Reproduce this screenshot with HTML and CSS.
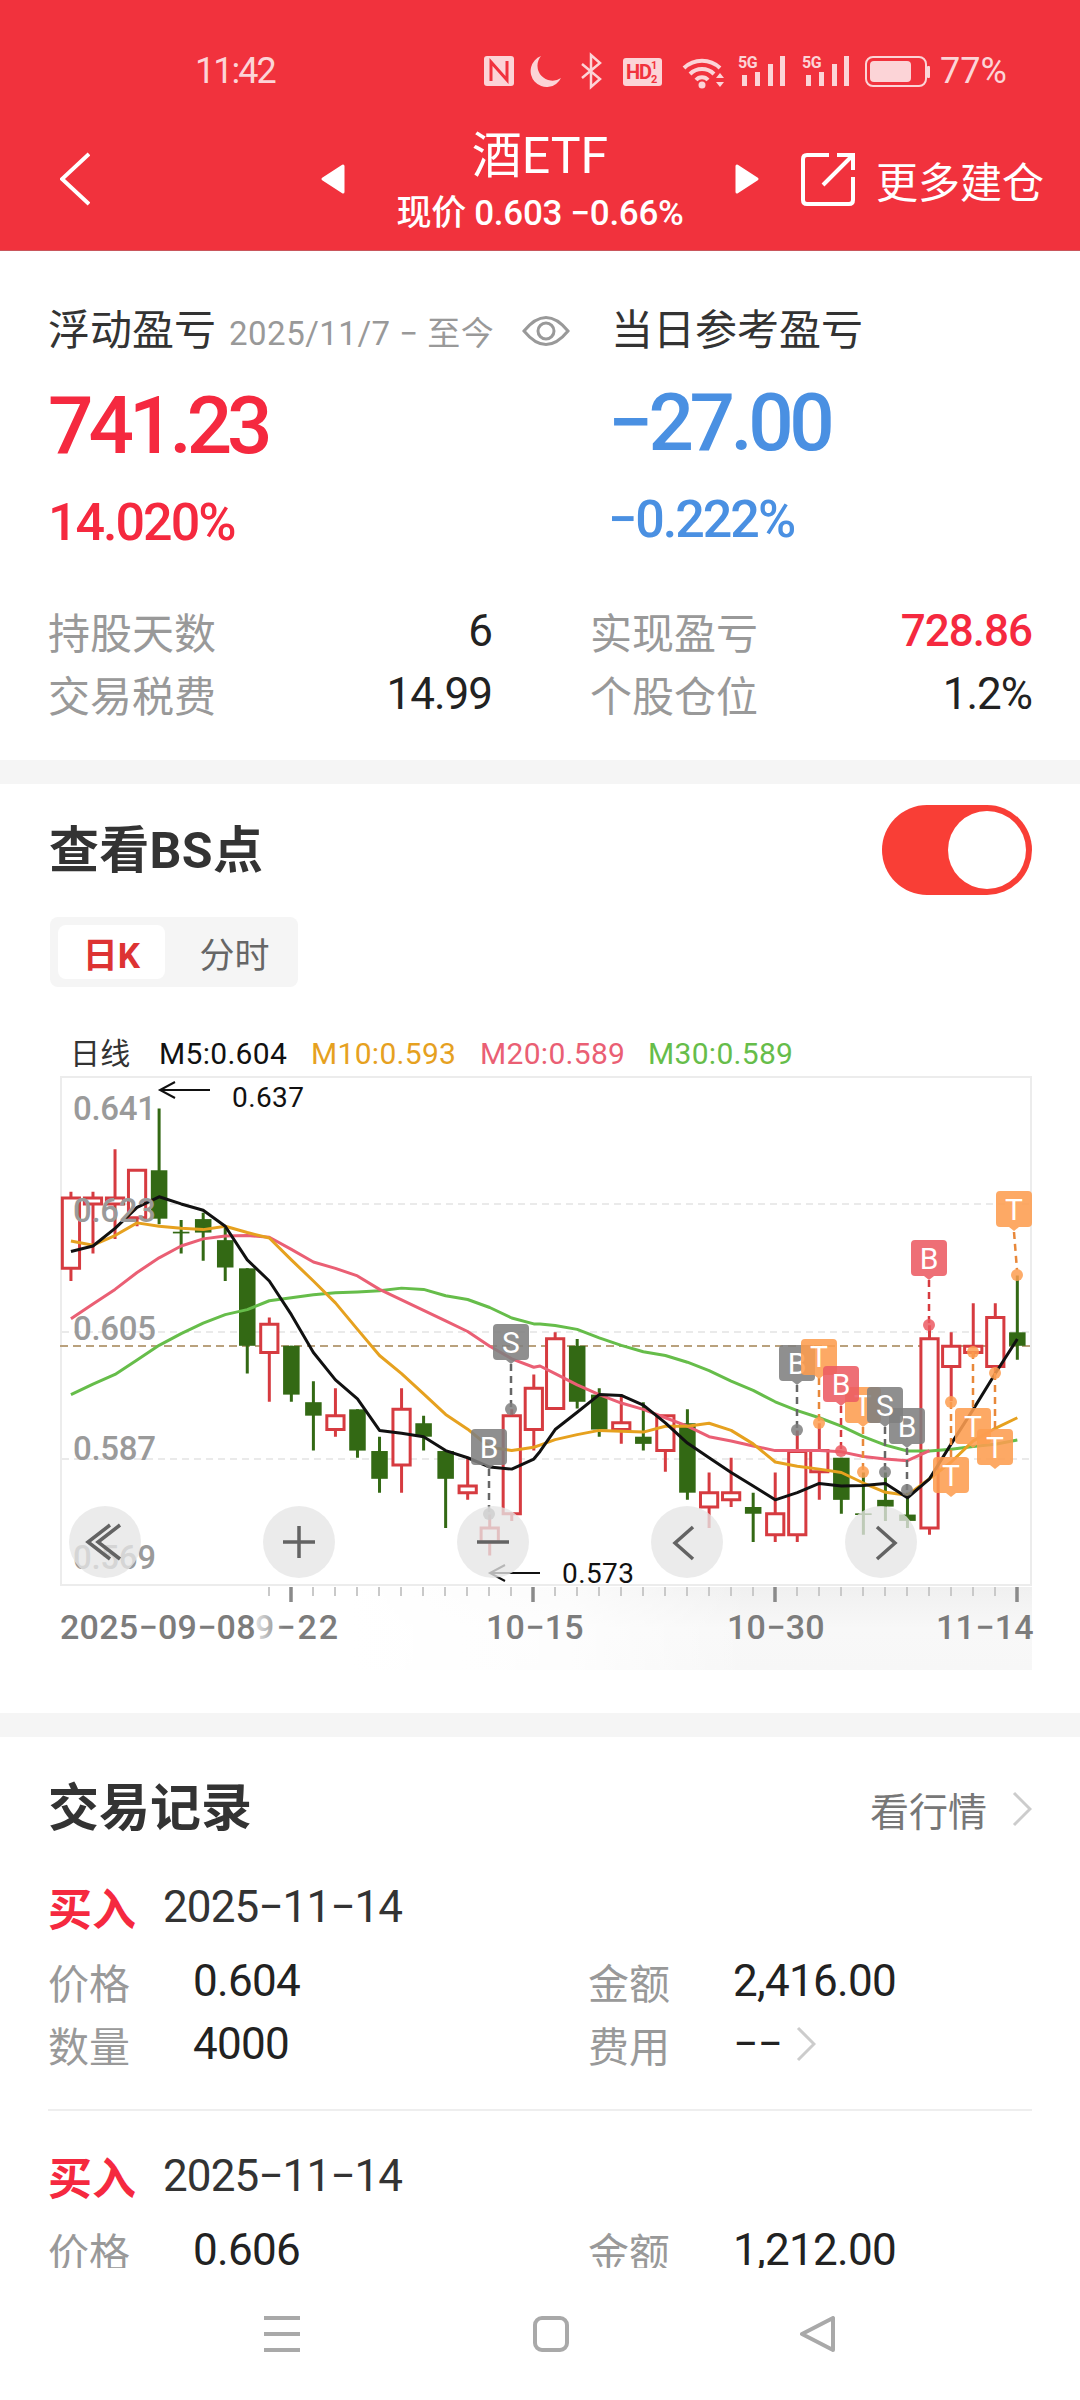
FILE: index.html
```html
<!DOCTYPE html>
<html lang="zh">
<head>
<meta charset="utf-8">
<title>酒ETF</title>
<link rel="stylesheet" href="styles.css">
</head>
<body>
<div class="page">
<div class="content">
  <header class="header">
    <div class="status">
      <span class="clock">11:42</span>
      <svg class="status-icons" viewBox="484 50 446 42" width="446" height="42">
        <rect x="484" y="56" width="30" height="30" rx="3" class="si"/>
        <path d="M491 81V62L507 80V61" class="si-cut"/>
        <path d="M541 56A16 16 0 1 0 561 78A15 15 0 0 1 541 56Z" class="si"/>
        <path d="M582 64L600 79L591 87V55L600 63L582 78" class="si-line"/>
        <rect x="623" y="58" width="39" height="28" rx="3" class="si"/>
        <text x="626" y="79" class="si-hd">HD</text>
        <text x="651" y="69" class="si-sub">1</text>
        <text x="651" y="83" class="si-sub">2</text>
        <path d="M684 68A26 26 0 0 1 720 68M690 74A17 17 0 0 1 714 74M696 80A8 8 0 0 1 708 80" class="si-wifi"/>
        <circle cx="702" cy="85" r="3.5" class="si"/>
        <path d="M716 78L720 73L724 78ZM716 82L720 87L724 82Z" class="si"/>
        <text x="738" y="68" class="si-5g">5G</text>
        <path d="M742 75h5v11h-5ZM755 72h5v14h-5ZM768 64h5v22h-5ZM780 56h5v30h-5Z" class="si"/>
        <text x="802" y="68" class="si-5g">5G</text>
        <path d="M806 75h5v11h-5ZM819 72h5v14h-5ZM832 64h5v22h-5ZM844 56h5v30h-5Z" class="si"/>
        <rect x="866" y="57" width="60" height="29" rx="7" class="si-batt"/>
        <rect x="870" y="61" width="41" height="21" rx="4" class="si"/>
        <rect x="927" y="66" width="3" height="12" rx="1" class="si"/>
      </svg>
      <span class="batt-pct">77%</span>
    </div>
    <nav class="nav">
      <svg class="nav-back" viewBox="0 0 30 54" width="30" height="54"><path d="M29 2L2 27L29 52"/></svg>
      <svg class="nav-tri" viewBox="0 0 24 30" width="24" height="30"><path d="M22 2V28L2 15Z"/></svg>
      <div class="nav-title">
        <div class="title">酒ETF</div>
        <div class="subtitle">现价 0.603 −0.66%</div>
      </div>
      <svg class="nav-tri" viewBox="0 0 24 30" width="24" height="30"><path d="M2 2V28L22 15Z"/></svg>
      <svg class="nav-share" viewBox="0 0 54 54" width="54" height="54"><path d="M28 3H6Q2 3 2 7V48Q2 52 6 52H48Q52 52 52 48V25M22 33L52 3M36 3H52V18"/></svg>
      <span class="nav-more">更多建仓</span>
    </nav>
  </header>

  <section class="pnl">
    <div class="pnl-cols">
      <div class="pnl-col">
        <div class="pnl-head">
          <span class="pnl-label">浮动盈亏</span>
          <span class="pnl-date">2025/11/7 − 至今</span>
          <svg class="eye" viewBox="0 0 48 36" width="48" height="36"><path d="M2 18Q24 -9 46 18Q24 45 2 18Z"/><circle cx="24" cy="18" r="8"/></svg>
        </div>
        <div class="pnl-value up">741.23</div>
        <div class="pnl-pct up">14.020%</div>
      </div>
      <div class="pnl-col">
        <div class="pnl-head"><span class="pnl-label">当日参考盈亏</span></div>
        <div class="pnl-value down shift">−27.00</div>
        <div class="pnl-pct down shift-x">−0.222%</div>
      </div>
    </div>
    <div class="stats">
      <div class="stat"><span class="stat-label">持股天数</span><span class="stat-val">6</span></div>
      <div class="stat"><span class="stat-label">实现盈亏</span><span class="stat-val red">728.86</span></div>
      <div class="stat"><span class="stat-label">交易税费</span><span class="stat-val">14.99</span></div>
      <div class="stat"><span class="stat-label">个股仓位</span><span class="stat-val">1.2%</span></div>
    </div>
  </section>
  <div class="gap"></div>

  <section class="bs">
    <div class="bs-head">
      <h2 class="bs-title">查看BS点</h2>
      <div class="toggle"><span class="knob"></span></div>
    </div>
    <div class="tabs"><span class="tab active">日K</span><span class="tab">分时</span></div>
    <div class="legend">
      <span class="lg-name">日线</span>
      <span class="lg-m5">M5:0.604</span>
      <span class="lg-m10">M10:0.593</span>
      <span class="lg-m20">M20:0.589</span>
      <span class="lg-m30">M30:0.589</span>
    </div>
    <svg class="chart" viewBox="0 1075 1080 605" width="1080" height="605">
      <defs>
        <path id="flag" d="M-14 0H14a4 4 0 0 1 4 4V32a4 4 0 0 1-4 4H5L0 40L-5 36H-14a4 4 0 0 1-4-4V4a4 4 0 0 1 4-4Z"/>
        <linearGradient id="fadeV" x1="0" y1="0" x2="0" y2="1"><stop offset="0" stop-color="#f0f0f0"/><stop offset=".5" stop-color="#f8f8f8"/><stop offset="1" stop-color="#f7f7f7"/></linearGradient>
        <linearGradient id="fadeH" x1="0" y1="0" x2="1" y2="0"><stop offset="0" stop-color="#fff"/><stop offset=".55" stop-color="#fff" stop-opacity=".75"/><stop offset="1" stop-color="#fff" stop-opacity="0"/></linearGradient>
        <linearGradient id="fadeT" x1="0" y1="0" x2="1" y2="0"><stop offset="0" stop-color="#fff" stop-opacity=".9"/><stop offset="1" stop-color="#fff" stop-opacity="0"/></linearGradient>
      </defs>
      <rect x="350" y="1587" width="682" height="83" fill="url(#fadeV)"/>
      <rect x="350" y="1587" width="400" height="83" fill="url(#fadeH)"/>
      <rect x="61" y="1077" width="970" height="508" class="frame"/>
      <path d="M62 1204H1030M62 1332H1030M62 1459H1030" class="grid"/>
      <path d="M60 1346H1032" class="price"/>

      <g transform="translate(0 1020) scale(.34439 .42092)">
        <g class="greens">
          <path d="M462 210V485M526 475V555M590 458V572M654 490V620M718 590V840M846 774V907M910 858V1023M1038 925V1040M1102 990V1123M1230 940V1023M1294 1024V1207"/>
          <rect x="438" y="357" width="48" height="115"/><rect x="502" y="503" width="48" height="4"/><rect x="566" y="473" width="48" height="32"/><rect x="630" y="523" width="48" height="65"/><rect x="694" y="590" width="48" height="184"/><rect x="822" y="774" width="48" height="116"/><rect x="886" y="908" width="48" height="32"/><rect x="1014" y="925" width="48" height="98"/><rect x="1078" y="1024" width="48" height="66"/><rect x="1206" y="958" width="48" height="32"/><rect x="1270" y="1024" width="48" height="66"/>
        </g>
        <g class="reds">
          <path d="M206 408V620M270 408V555M334 307V520M398 357V490M782 707V907M974 875V990M1166 875V1123M1358 1040V1140M1422 1175V1272M1486 925V1190M1550 842V1023"/>
          <rect x="181" y="423" width="50" height="167"/><rect x="245" y="423" width="50" height="14"/><rect x="309" y="423" width="50" height="14"/><rect x="373" y="357" width="50" height="113"/><rect x="757" y="723" width="50" height="67"/><rect x="949" y="940" width="50" height="33"/><rect x="1141" y="925" width="50" height="132"/><rect x="1333" y="1107" width="50" height="16"/><rect x="1397" y="1207" width="50" height="33"/><rect x="1461" y="940" width="50" height="233"/><rect x="1525" y="875" width="50" height="98"/>
        </g>
        <g transform="translate(1568 0)">
          <g class="greens">
            <path d="M108 758V923M172 875V990M300 908V1023M428 925V1140M619 1123V1240M875 1040V1173M939 1075V1223M1003 1075V1190M1067 1123V1207M1386 607V807"/>
            <rect x="84" y="774" width="48" height="133"/><rect x="148" y="890" width="48" height="83"/><rect x="276" y="990" width="48" height="17"/><rect x="404" y="958" width="48" height="165"/><rect x="595" y="1157" width="48" height="16"/><rect x="851" y="1040" width="48" height="100"/><rect x="915" y="1172" width="48" height="4"/><rect x="979" y="1140" width="48" height="16"/><rect x="1043" y="1175" width="48" height="15"/><rect x="1362" y="742" width="48" height="32"/>
          </g>
          <g class="reds">
            <path d="M44 742V923M236 890V1007M364 940V1073M491 1075V1207M555 1040V1157M683 1075V1240M747 975V1240M811 958V1140M1131 725V1223M1194 742V905M1258 673V800M1322 673V840"/>
            <rect x="19" y="757" width="50" height="166"/><rect x="211" y="957" width="50" height="16"/><rect x="339" y="940" width="50" height="83"/><rect x="466" y="1123" width="50" height="34"/><rect x="530" y="1123" width="50" height="17"/><rect x="658" y="1173" width="50" height="50"/><rect x="722" y="1025" width="50" height="198"/><rect x="786" y="1023" width="50" height="50"/><rect x="1106" y="757" width="50" height="450"/><rect x="1169" y="775" width="50" height="48"/><rect x="1233" y="775" width="50" height="15"/><rect x="1297" y="707" width="50" height="116"/>
          </g>
        </g>
        <polyline class="ma ma30" points="206,890 270,865 334,842 398,808 462,773 526,745 590,720 654,700 718,688 782,667 846,660 910,653 974,648 1038,646 1102,643 1166,637 1230,640 1294,655 1358,664 1422,683 1486,708 1550,722 1568,722 1612,726 1676,735 1740,755 1804,773 1868,788 1932,797 1996,813 2059,833 2123,858 2187,880 2251,907 2315,928 2379,945 2443,965 2507,990 2571,1010 2635,1024 2699,1024 2762,1020 2826,1013 2890,1008 2954,998"/>
        <polyline class="ma ma20" points="206,710 270,675 334,640 398,600 462,565 526,537 590,520 654,513 718,512 782,516 846,545 910,575 974,590 1038,608 1102,640 1166,665 1230,690 1294,715 1358,740 1422,775 1486,805 1550,825 1568,822 1612,840 1676,867 1740,890 1804,910 1868,925 1932,945 1996,965 2059,990 2123,1000 2187,1012 2251,1023 2315,1023 2379,1023 2443,1026 2507,1037 2571,1043 2635,1047 2699,1023"/>
        <polyline class="ma ma10" points="206,525 270,535 334,512 398,482 462,490 526,495 590,498 654,490 718,505 782,518 846,570 910,620 974,672 1038,735 1102,797 1166,840 1230,888 1294,937 1358,972 1422,1015 1486,1023 1550,1015 1568,1010 1612,997 1676,985 1740,975 1804,977 1868,979 1932,965 1996,965 2059,958 2123,975 2187,1007 2251,1050 2315,1060 2379,1067 2443,1075 2507,1100 2571,1122 2635,1129 2699,1090 2762,1050 2826,1000 2890,970 2954,945"/>
        <polyline class="ma ma5" points="206,550 270,537 334,495 398,445 462,420 526,437 590,452 654,490 718,570 782,620 846,700 910,790 974,855 1038,900 1102,975 1166,982 1230,990 1294,1023 1358,1040 1422,1062 1486,1067 1550,1043 1568,1025 1612,973 1676,932 1740,890 1804,892 1868,915 1932,957 1996,1005 2059,1040 2123,1075 2187,1107 2251,1140 2315,1123 2379,1101 2443,1107 2507,1106 2571,1101 2635,1135 2699,1090 2762,1007 2826,925 2890,840 2954,758"/>
      </g>

      <g class="axis">
        <text x="73" y="1120">0.641</text>
        <text x="73" y="1222">0.623</text>
        <text x="73" y="1340">0.605</text>
        <text x="73" y="1460">0.587</text>
        <text x="73" y="1569">0.569</text>
      </g>

      <path d="M210 1090H160M175 1082L160 1090L175 1098" class="arrow"/>
      <text x="232" y="1107" class="mark">0.637</text>
      <path d="M540 1573H490M505 1565L490 1573L505 1581" class="arrow"/>
      <text x="562" y="1583" class="mark">0.573</text>

      <g class="f-grey"><path class="d" d="M489 1469V1514"/><circle cx="489" cy="1514" r="6"/><use href="#flag" transform="translate(489 1429)"/><text x="489" y="1458">B</text></g>
      <g class="f-grey"><path class="d" d="M511 1364V1409"/><circle cx="511" cy="1409" r="6"/><use href="#flag" transform="translate(511 1324)"/><text x="511" y="1353">S</text></g>
      <g class="f-grey"><path class="d" d="M797 1385V1430"/><circle cx="797" cy="1430" r="6"/><use href="#flag" transform="translate(797 1345)"/><text x="797" y="1374">B</text></g>
      <g class="f-orange"><path class="d" d="M819 1378V1423"/><circle cx="819" cy="1423" r="6"/><use href="#flag" transform="translate(819 1339)"/><text x="819" y="1367">T</text></g>
      <g class="f-orange"><path class="d" d="M863 1427V1472"/><circle cx="863" cy="1472" r="6"/><use href="#flag" transform="translate(863 1387)"/><text x="863" y="1416">T</text></g>
      <g class="f-red"><path class="d" d="M841 1406V1451"/><circle cx="841" cy="1451" r="6"/><use href="#flag" transform="translate(841 1366)"/><text x="841" y="1395">B</text></g>
      <g class="f-grey"><path class="d" d="M907 1448V1490"/><circle cx="907" cy="1490" r="6"/><use href="#flag" transform="translate(907 1408)"/><text x="907" y="1437">B</text></g>
      <g class="f-grey"><path class="d" d="M885 1427V1472"/><circle cx="885" cy="1472" r="6"/><use href="#flag" transform="translate(885 1387)"/><text x="885" y="1416">S</text></g>
      <g class="f-red"><path class="d" d="M929 1280V1325"/><circle cx="929" cy="1325" r="6"/><use href="#flag" transform="translate(929 1240)"/><text x="929" y="1269">B</text></g>
      <g class="f-orange"><path class="d" d="M951 1402V1457"/><circle cx="951" cy="1402" r="6"/><use href="#flag" transform="translate(951 1457)"/><text x="951" y="1486">T</text></g>
      <g class="f-orange"><path class="d" d="M973 1352V1408"/><circle cx="973" cy="1352" r="6"/><use href="#flag" transform="translate(973 1408)"/><text x="973" y="1437">T</text></g>
      <g class="f-orange"><path class="d" d="M995 1373V1429"/><circle cx="995" cy="1373" r="6"/><use href="#flag" transform="translate(995 1429)"/><text x="995" y="1458">T</text></g>
      <g class="f-orange"><path class="d" d="M1014 1232L1017 1270"/><circle cx="1017" cy="1275" r="6"/><use href="#flag" transform="translate(1014 1191)"/><text x="1014" y="1220">T</text></g>

      <circle cx="105" cy="1542" r="36" class="btn"/><path d="M110 1525L88 1542L110 1559M120 1525L98 1542L120 1559" class="btn-ico"/>
      <circle cx="299" cy="1542" r="36" class="btn"/><path d="M283 1542H315M299 1526V1558" class="btn-ico"/>
      <circle cx="493" cy="1542" r="36" class="btn"/><path d="M477 1542H509" class="btn-ico"/>
      <circle cx="687" cy="1542" r="36" class="btn"/><path d="M693 1527L675 1543L693 1559" class="btn-ico"/>
      <circle cx="881" cy="1542" r="36" class="btn"/><path d="M877 1527L895 1543L877 1559" class="btn-ico"/>

      <path d="M269 1587v9M313 1587v9M335 1587v9M357 1587v9M379 1587v9M401 1587v9M423 1587v9M445 1587v9M467 1587v9M489 1587v9M511 1587v9M555 1587v9M577 1587v9M599 1587v9M621 1587v9M643 1587v9M665 1587v9M687 1587v9M709 1587v9M731 1587v9M753 1587v9M797 1587v9M819 1587v9M841 1587v9M863 1587v9M885 1587v9M907 1587v9M929 1587v9M951 1587v9M973 1587v9M995 1587v9" class="tick"/>
      <path d="M291 1587v15M533 1587v15M775 1587v15M1017 1587v15" class="tick-major"/>
      <g class="dates">
        <text x="255" y="1639" class="wide">9−22</text>
        <text x="486" y="1639">10−15</text>
        <text x="727" y="1639">10−30</text>
        <text x="936" y="1639">11−14</text>
      </g>
      <rect x="252" y="1610" width="32" height="34" fill="url(#fadeT)"/>
      <text x="60" y="1639" class="dates-first">2025−09−08</text>
    </svg>
  </section>
  <div class="gap"></div>

  <section class="trades">
    <div class="trades-head">
      <h2 class="trades-title">交易记录</h2>
      <div class="trades-link"><span>看行情</span><svg class="chev" viewBox="0 0 20 36" width="20" height="36"><path d="M2 2L18 18L2 34"/></svg></div>
    </div>
    <div class="rec">
      <div class="rec-top"><span class="rec-side">买入</span><span class="rec-date">2025−11−14</span></div>
      <div class="rec-grid">
        <div class="rec-cell"><span class="rec-label">价格</span><span class="rec-val">0.604</span></div>
        <div class="rec-cell"><span class="rec-label">金额</span><span class="rec-val">2,416.00</span></div>
        <div class="rec-cell"><span class="rec-label">数量</span><span class="rec-val">4000</span></div>
        <div class="rec-cell"><span class="rec-label">费用</span><span class="rec-val">−−</span><svg class="chev small" viewBox="0 0 20 36" width="20" height="36"><path d="M2 2L18 18L2 34"/></svg></div>
      </div>
    </div>
    <div class="rec second">
      <div class="rec-top"><span class="rec-side">买入</span><span class="rec-date">2025−11−14</span></div>
      <div class="rec-grid">
        <div class="rec-cell"><span class="rec-label">价格</span><span class="rec-val">0.606</span></div>
        <div class="rec-cell"><span class="rec-label">金额</span><span class="rec-val">1,212.00</span></div>
      </div>
    </div>
  </section>
</div>
<footer class="navbar">
  <svg viewBox="0 0 38 36" width="38" height="36" class="nb-ico"><path d="M1 2H37M1 18H37M1 34H37"/></svg>
  <svg viewBox="0 0 36 36" width="36" height="36" class="nb-ico"><rect x="2" y="2" width="32" height="32" rx="7"/></svg>
  <svg viewBox="0 0 36 36" width="36" height="36" class="nb-ico"><path d="M33 2V34L2 18Z" stroke-linejoin="round"/></svg>
</footer>
</div>
</body>
</html>
```

FILE: styles.css
```css
* { box-sizing: border-box; }
html, body { margin: 0; padding: 0; background: #fff; }
body { width: 1080px; height: 2400px; overflow: hidden; font-family: Roboto, "Noto Sans CJK SC", sans-serif; color: #333; }
h2 { margin: 0; }
.page { display: flex; flex-direction: column; height: 2400px; }
.content { height: 2268px; overflow: hidden; }

/* header */
.header { display: flex; flex-direction: column; height: 251px; padding-top: 40px; background: #f1323d; border-bottom: 1px solid #c9565c; color: #fff; }
.status { display: flex; align-items: center; height: 62px; padding-left: 195px; color: #fcd4d7; }
.clock { font-size: 36px; letter-spacing: -2px; width: 289px; line-height: 62px; }
.status-icons { display: block; }
.batt-pct { font-size: 36px; margin-left: 10px; line-height: 62px; }
.si { fill: #fcd4d7; }
.si-cut { fill: none; stroke: #f1323d; stroke-width: 3; }
.si-line { fill: none; stroke: #fcd4d7; stroke-width: 2.5; }
.si-wifi { fill: none; stroke: #fcd4d7; stroke-width: 4; }
.si-batt { fill: none; stroke: #fcd4d7; stroke-width: 2; }
.si-hd { font-size: 20px; font-weight: 700; fill: #f1323d; letter-spacing: -1px; }
.si-sub { font-size: 11px; font-weight: 700; fill: #f1323d; }
.si-5g { font-size: 16px; font-weight: 700; fill: #fcd4d7; letter-spacing: -.5px; }

.nav { display: flex; align-items: center; height: 118px; margin-top: 18px; padding-left: 60px; }
.nav-back { fill: none; stroke: #fff; stroke-width: 4; margin-right: 231px; }
.nav-tri { fill: #fff; stroke: #fff; stroke-width: 3; stroke-linejoin: round; flex: none; }
.nav-title { width: 390px; align-self: stretch; padding-top: 8px; text-align: center; }
.title { font-size: 50px; line-height: 56px; }
.subtitle { font-size: 35px; line-height: 38px; margin-top: 11px; font-weight: 500; letter-spacing: -.3px; }
.nav-share { fill: none; stroke: #fff; stroke-width: 4; margin-left: 42px; flex: none; }
.nav-more { font-size: 42px; margin-left: 21px; line-height: 50px; padding-top: 10px; white-space: nowrap; }

/* pnl */
.pnl { height: 509px; padding: 49px 48px 0 48px; background: #fff; }
.pnl-cols { display: grid; grid-template-columns: 563px 1fr; }
.pnl-head { display: flex; align-items: center; height: 62px; }
.pnl-label { font-size: 42px; line-height: 62px; color: #333; }
.pnl-date { font-size: 33px; color: #999; margin-left: 13px; white-space: nowrap; letter-spacing: .5px; }
.eye { fill: none; stroke: #999; stroke-width: 3; margin-left: 28px; flex: none; }
.pnl-value { font-size: 80px; line-height: 80px; font-weight: 500; letter-spacing: -5px; margin-top: 24px; }
.pnl-value.shift { margin: 21px 0 0 -3px; letter-spacing: -4.5px; }
.pnl-pct { font-size: 52px; line-height: 50px; font-weight: 500; letter-spacing: -2px; margin-top: 32px; }
.pnl-pct.shift-x { margin-left: -3px; }
.up { color: #f5293f; }
.down { color: #4a90e2; }
.stats { display: grid; grid-template-columns: 444px 442px; column-gap: 98px; margin-top: 51px; }
.stat { display: flex; justify-content: space-between; align-items: center; height: 63px; }
.stat-label { font-size: 42px; color: #999; }
.stat-val { font-size: 44px; color: #222; letter-spacing: -1px; }
.stat-val.red { color: #f5293f; font-weight: 500; }
.gap { height: 24px; background: #f5f5f5; }

/* bs */
.bs { height: 929px; padding-top: 21px; background: #fff; }
.bs-head { display: flex; justify-content: space-between; align-items: center; padding: 0 48px 0 49px; }
.bs-title { font-size: 50px; font-weight: 700; color: #333; line-height: 60px; padding-top: 2px; letter-spacing: .3px; }
.toggle { display: flex; justify-content: flex-end; align-items: center; width: 150px; height: 90px; border-radius: 45px; background: #f93e36; padding-right: 6px; }
.knob { width: 78px; height: 78px; border-radius: 50%; background: #fff; }
.tabs { display: flex; align-items: center; width: 248px; height: 70px; margin: 22px 0 0 50px; padding: 8px; border-radius: 8px; background: #f5f5f5; font-size: 35px; }
.tab { display: flex; justify-content: center; align-items: center; width: 107px; height: 54px; color: #666; margin-left: 16px; }
.tab.active { margin-left: 0; border-radius: 8px; background: #fff; color: #d33; font-weight: 700; }
.legend { display: flex; height: 30px; margin-top: 52px; padding-left: 70px; font-size: 30px; line-height: 30px; white-space: nowrap; }
.legend span { letter-spacing: .3px; }
.lg-name { color: #333; width: 89px; }
.lg-m5 { color: #111; width: 152px; }
.lg-m10 { color: #e6a11f; width: 169px; }
.lg-m20 { color: #ea5f74; width: 168px; }
.lg-m30 { color: #66bd4a; }
.chart { display: block; margin-top: 6px; font-family: Roboto, sans-serif; }
.frame { fill: #fff; stroke: #ececec; stroke-width: 2; }
.grid { stroke: #e3e3e3; stroke-width: 1.5; stroke-dasharray: 7 5; fill: none; }
.price { stroke: #b9a17d; stroke-width: 2; stroke-dasharray: 8 5; fill: none; }
.greens path { stroke: #336914; stroke-width: 3; fill: none; vector-effect: non-scaling-stroke; }
.greens rect { fill: #336914; }
.reds path { stroke: #d63b40; stroke-width: 3; fill: none; vector-effect: non-scaling-stroke; }
.reds rect { fill: #fff; stroke: #d63b40; stroke-width: 3; vector-effect: non-scaling-stroke; }
.ma { fill: none; stroke-width: 3; stroke-linejoin: round; vector-effect: non-scaling-stroke; }
.ma5 { stroke: #111; }
.ma10 { stroke: #e6a11f; }
.ma20 { stroke: #ea5f74; }
.ma30 { stroke: #66bd4a; }
.axis text { font-size: 33px; font-weight: 500; fill: #9a9a9a; letter-spacing: -.3px; }
.arrow { fill: none; stroke: #111; stroke-width: 2; }
.mark { font-size: 28px; fill: #111; letter-spacing: .4px; }
.f-grey { fill: #7f7f7f; stroke: #666; }
.f-orange { fill: #fd9d50; stroke: #e8883a; }
.f-red { fill: #ec5b63; stroke: #d63b40; }
.f-grey use, .f-orange use, .f-red use { stroke: none; opacity: .88; }
.f-grey circle, .f-orange circle, .f-red circle { stroke: none; opacity: .85; }
.d { fill: none; stroke-width: 2.5; stroke-dasharray: 7 5; }
.f-grey text, .f-orange text, .f-red text { font-size: 30px; fill: #fff; stroke: none; text-anchor: middle; }
.btn { fill: rgba(230, 230, 230, .78); }
.btn-ico { fill: none; stroke: #636363; stroke-width: 3.5; }
.tick { stroke: #c9c9c9; stroke-width: 2; fill: none; }
.tick-major { stroke: #8a8a8a; stroke-width: 3.5; fill: none; }
.dates text, .dates-first { font-size: 34px; fill: #7c7c7c; letter-spacing: .3px; font-weight: 500; }
.dates .wide { letter-spacing: 2px; }

/* trades */
.trades { padding: 44px 48px 0 48px; background: #fff; }
.trades-head { display: flex; justify-content: space-between; align-items: center; height: 56px; }
.trades-title { font-size: 51px; line-height: 56px; font-weight: 700; color: #333; }
.trades-link { display: flex; align-items: center; gap: 25px; font-size: 39px; color: #777; }
.chev { fill: none; stroke: #ccc; stroke-width: 3; flex: none; }
.chev.small { margin-left: 14px; }
.rec { margin-top: 45px; padding-bottom: 34px; border-bottom: 2px solid #eee; }
.rec.second { margin-top: 40px; border-bottom: 0; }
.rec-top { display: flex; align-items: center; height: 50px; }
.rec-side { font-size: 44px; font-weight: 700; color: #f5293f; width: 115px; }
.rec-date { font-size: 44px; color: #333; letter-spacing: -.9px; }
.rec-grid { display: grid; grid-template-columns: 540px 1fr; margin-top: 17px; }
.rec-cell { display: flex; align-items: center; height: 63px; }
.rec-label { font-size: 41px; color: #999; width: 145px; }
.rec-val { font-size: 44px; color: #222; letter-spacing: -.7px; }

/* bottom nav */
.navbar { display: flex; height: 132px; padding: 48px 0 0 263px; background: #fff; }
.nb-ico { fill: none; stroke: #a9a9a9; stroke-width: 4; flex: none; }
.nb-ico + .nb-ico { margin-left: 232px; }
.nb-ico + .nb-ico + .nb-ico { margin-left: 231px; }
```
